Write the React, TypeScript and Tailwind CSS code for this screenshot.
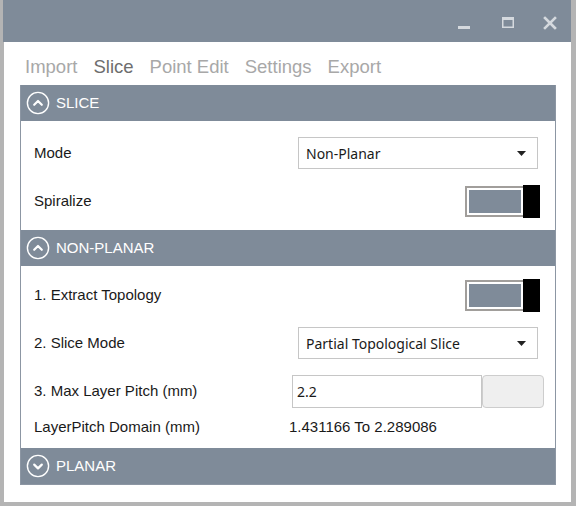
import type { JSX } from "react";

const label = "[font-family:'Liberation_Sans',Arial,sans-serif] text-[15px] text-[#1a1a1a]";
const seg = "[font-family:'Noto_Sans','Open_Sans',sans-serif] text-[14px] text-[#1a1a1a]";

const Chevron = ({ up }: { up: boolean }) => (
  <svg width="24" height="24" viewBox="0 0 24 24" className="shrink-0">
    <circle cx="12" cy="12" r="10.6" fill="none" stroke="#ffffff" strokeWidth="1.4" />
    <path
      d={up ? "M8.2 13.8 L12 10 L15.8 13.8" : "M8.2 10.6 L12 14.4 L15.8 10.6"}
      fill="none"
      stroke="#ffffff"
      strokeWidth="2.2"
      strokeLinecap="round"
      strokeLinejoin="round"
    />
  </svg>
);

const Header = ({ title, up }: { title: string; up: boolean }) => (
  <div className="h-[36px] bg-[#7f8b99] flex items-center gap-[6px] pl-[5px]">
    <Chevron up={up} />
    <span className="[font-family:'Liberation_Sans',Arial,sans-serif] text-[15px] text-white">{title}</span>
  </div>
);

const Toggle = () => (
  <div className="relative w-[75px] h-[33px] mr-[15px]">
    <div className="absolute left-0 top-[1px] w-[60px] h-[31px] border-2 border-[#a19e9b] bg-white p-[2px]">
      <div className="w-full h-full bg-[#7f8b99]" />
    </div>
    <div className="absolute right-0 top-0 w-[17px] h-[33px] bg-black" />
  </div>
);

const Select = ({ value }: { value: string }) => (
  <div className="w-[240px] h-[32px] mr-[17px] border border-[#c6c6c6] bg-white flex items-center justify-between pl-[7px] pr-[11px]">
    <span className={seg}>{value}</span>
    <svg width="9" height="5" viewBox="0 0 9 5">
      <path d="M0 0 L9 0 L4.5 5 Z" fill="#222" />
    </svg>
  </div>
);

const Row = ({ text, children }: { text: string; children: JSX.Element }) => (
  <div className="h-[48px] flex items-center justify-between pl-[13px]">
    <span className={label}>{text}</span>
    {children}
  </div>
);

export default function App(): JSX.Element {
  const tabs = ["Import", "Slice", "Point Edit", "Settings", "Export"];
  return (
    <div className="w-[576px] h-[506px] bg-[#b4b4b4] pl-[4px] pr-[5px] pb-[4px] flex flex-col">
      {/* title bar */}
      <div className="h-[42px] -ml-[1px] bg-[#7f8b99] flex items-start justify-end pr-[14px] pt-[16px]">
        <svg width="12" height="14" viewBox="0 0 12 14">
          <rect x="0" y="10" width="12" height="3" fill="#d5d9de" />
        </svg>
        <svg width="12" height="12" viewBox="0 0 12 12" className="ml-[32px]">
          <rect x="0.75" y="1.75" width="10.5" height="9.5" fill="none" stroke="#d5d9de" strokeWidth="1.5" />
          <rect x="0" y="1" width="12" height="3" fill="#d5d9de" />
        </svg>
        <svg width="14" height="14" viewBox="0 0 14 14" className="ml-[29px]">
          <path d="M2 2 L12 12 M12 2 L2 12" stroke="#d5d9de" strokeWidth="2.6" strokeLinecap="square" />
        </svg>
      </div>

      {/* body */}
      <div className="flex-1 bg-white flex flex-col">
        <div className="flex gap-[16px] pl-[21px] pt-[14px] h-[43px] [font-family:'Liberation_Sans',Arial,sans-serif] text-[18.5px] leading-[22px]">
          {tabs.map((t) => (
            <span key={t} className={t === "Slice" ? "text-[#6e6e6e]" : "text-[#a8a8a8]"}>
              {t}
            </span>
          ))}
        </div>

        <div className="ml-[16px] mr-[15px] border-x border-b border-[#8c96a3]">
          <Header title="SLICE" up />
          <div className="pt-[8px] pb-[5px]">
            <Row text="Mode">
              <Select value="Non-Planar" />
            </Row>
            <Row text="Spiralize">
              <Toggle />
            </Row>
          </div>

          <Header title="NON-PLANAR" up />
          <div className="pt-[5px] pb-[9px]">
            <Row text="1. Extract Topology">
              <Toggle />
            </Row>
            <Row text="2. Slice Mode">
              <Select value="Partial Topological Slice" />
            </Row>
            <Row text="3. Max Layer Pitch (mm)">
              <div className="flex mr-[11px]">
                <div className="w-[190px] h-[33px] border border-[#c6c6c6] flex items-center pl-[4px]">
                  <span className={seg}>2.2</span>
                </div>
                <div className="w-[62px] h-[33px] border border-[#cdcdcd] bg-[#efefef] rounded-[4px]" />
              </div>
            </Row>
            <div className="h-[24px] flex items-center pl-[13px]">
              <span className={`${label} w-[255px]`}>LayerPitch Domain (mm)</span>
              <span className={label}>1.431166 To 2.289086</span>
            </div>
          </div>

          <Header title="PLANAR" up={false} />
        </div>
      </div>
    </div>
  );
}
